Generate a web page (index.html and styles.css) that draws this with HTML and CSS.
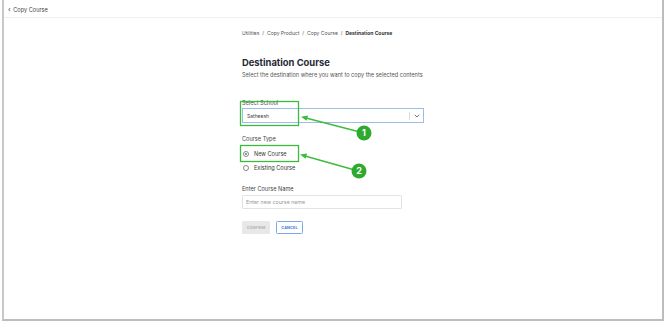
FILE: index.html
```html
<!DOCTYPE html>
<html>
<head>
<meta charset="utf-8">
<link rel="stylesheet" href="styles.css">
</head>
<body>
<div class="frame">
  <div class="topbar"><span class="back">&#8249;</span> Copy Course</div>
  <div class="content">
    <div class="crumbs">Utilities <span class="sep">/</span> Copy Product <span class="sep">/</span> Copy Course <span class="sep">/</span> <b>Destination Course</b></div>
    <h1 class="title">Destination Course</h1>
    <p class="subtitle">Select the destination where you want to copy the selected contents</p>

    <div class="label first">Select School</div>
    <div class="select">
      <span class="select-value">Satheesh</span>
      <span class="select-sep"></span>
      <svg class="chev" width="6" height="4" viewBox="0 0 6 4"><path d="M0.8 0.8 L3 3 L5.2 0.8" fill="none" stroke="#666" stroke-width="0.9"/></svg>
    </div>

    <div class="label section">Course Type</div>
    <div class="radio-row first-radio"><span class="radio checked"></span>New Course</div>
    <div class="radio-row second-radio"><span class="radio"></span>Existing Course</div>

    <div class="label section">Enter Course Name</div>
    <div class="input">Enter new course name</div>

    <div class="buttons">
      <span class="btn confirm">CONFIRM</span>
      <span class="btn cancel">CANCEL</span>
    </div>
  </div>
</div>

<svg class="annotations" width="670" height="322" viewBox="0 0 670 322">
  <rect x="240.5" y="101.5" width="58" height="24" fill="none" stroke="#3dbb3d" stroke-width="1.3"/>
  <rect x="240.5" y="145.5" width="58" height="16" fill="none" stroke="#3dbb3d" stroke-width="1.3"/>
  <line x1="358" y1="131.5" x2="306" y2="118" stroke="#3dbb3d" stroke-width="1.3"/>
  <path d="M301 116.8 L308 115.6 L306.6 120.8 Z" fill="#3dbb3d"/>
  <line x1="353" y1="169.5" x2="305" y2="156" stroke="#3dbb3d" stroke-width="1.3"/>
  <path d="M300 154.6 L307 153.6 L305.6 158.8 Z" fill="#3dbb3d"/>
  <circle cx="364" cy="133" r="7.5" fill="#2faa2f"/>
  <text x="364" y="136.3" text-anchor="middle" class="num">1</text>
  <circle cx="359" cy="171" r="7.5" fill="#2faa2f"/>
  <text x="359" y="174.3" text-anchor="middle" class="num">2</text>
</svg>
</body>
</html>
```
FILE: styles.css
```css
html, body {
  margin: 0;
  padding: 0;
  background: #ffffff;
}
body {
  font-family: Inter, "Noto Sans", sans-serif;
  color: #2b2f38;
  position: relative;
  width: 670px;
  height: 322px;
  overflow: hidden;
}
.frame {
  box-sizing: border-box;
  margin-left: 2px;
  width: 662px;
  height: 321px;
  border-left: 2px solid #c8c8c8;
  border-right: 2px solid #bdbdbd;
  border-bottom: 2px solid #bdbdbd;
  background: #fff;
}
.topbar {
  height: 17px;
  border-bottom: 1px solid #efefef;
  font-size: 5.6px;
  line-height: 19px;
  padding-left: 4px;
  color: #444;
}
.back {
  font-size: 7px;
  margin-right: 1px;
}
.content {
  width: 182px;
  margin: 0 auto;
  padding-top: 11px;
}
.crumbs {
  font-size: 5px;
  line-height: 8px;
  height: 8px;
  color: #555;
  white-space: nowrap;
}
.crumbs .sep {
  margin: 0 1.5px;
}
.crumbs b {
  font-weight: 700;
  color: #333;
}
.title {
  margin: 20px 0 0;
  font-size: 9.4px;
  line-height: 12px;
  font-weight: 700;
  color: #262a36;
}
.subtitle {
  margin: 2px 0 0;
  font-size: 5.6px;
  line-height: 8px;
  color: #555;
  white-space: nowrap;
}
.label {
  font-size: 5.6px;
  line-height: 8px;
  color: #444;
}
.label.first {
  margin-top: 20px;
}
.label.section {
  margin-top: 12px;
}
.select {
  box-sizing: border-box;
  margin-top: 1px;
  height: 15px;
  border: 1px solid #9dbce9;
  display: flex;
  align-items: center;
  padding-left: 4px;
}
.select-value {
  flex: 1;
  font-size: 5px;
  color: #444;
}
.select-sep {
  width: 1px;
  height: 8px;
  background: #dcdcdc;
  margin-right: 4px;
}
.chev {
  margin-right: 3px;
}
.radio-row {
  display: flex;
  align-items: center;
  font-size: 5.6px;
  line-height: 10px;
  height: 10px;
  color: #333;
  padding-left: 1px;
}
.first-radio {
  margin-top: 6px;
}
.second-radio {
  margin-top: 4px;
}
.radio {
  box-sizing: border-box;
  width: 6px;
  height: 6px;
  border: 0.8px solid #888;
  border-radius: 50%;
  margin-right: 5px;
  position: relative;
}
.radio.checked::after {
  content: "";
  position: absolute;
  left: 1.2px;
  top: 1.2px;
  width: 2.2px;
  height: 2.2px;
  border-radius: 50%;
  background: #777;
}
.input {
  box-sizing: border-box;
  margin-top: 2px;
  width: 160px;
  height: 14px;
  border: 1px solid #e2e2e2;
  border-radius: 1px;
  font-size: 5.3px;
  line-height: 12px;
  padding-left: 3px;
  color: #999;
}
.buttons {
  display: flex;
  gap: 6px;
  margin-top: 12px;
}
.btn {
  box-sizing: border-box;
  height: 13px;
  font-size: 3.8px;
  font-weight: 700;
  display: flex;
  align-items: center;
  justify-content: center;
  border-radius: 1.5px;
  letter-spacing: 0.1px;
}
.btn.confirm {
  width: 28px;
  background: #e8e8e8;
  color: #b4b4b4;
}
.btn.cancel {
  width: 27px;
  border: 1px solid #7ba8e8;
  color: #3b7ad9;
  background: #fff;
}
.annotations {
  position: absolute;
  left: 0;
  top: 0;
}
.num {
  font-family: Inter, "Noto Sans", sans-serif;
  font-size: 9px;
  font-weight: 700;
  fill: #ffffff;
}
```
